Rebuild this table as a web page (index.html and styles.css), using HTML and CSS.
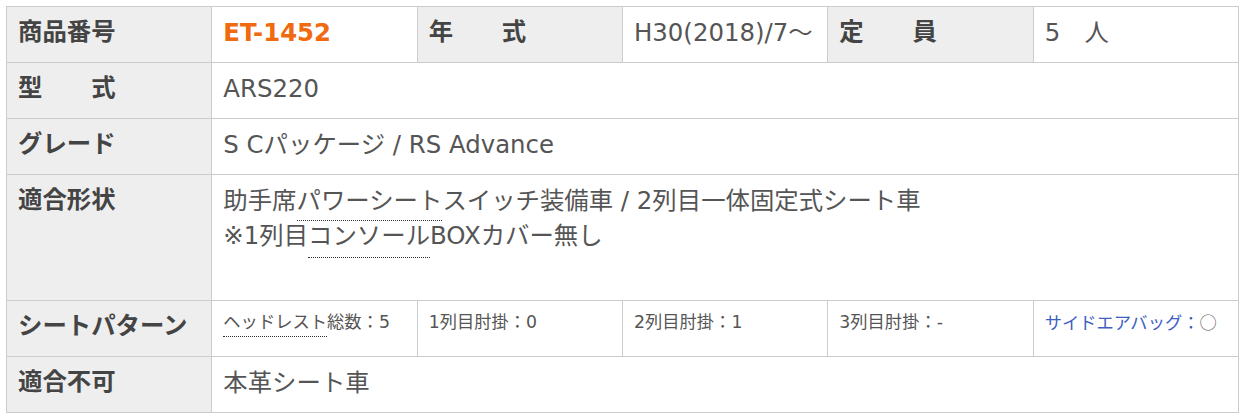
FILE: index.html
```html
<!DOCTYPE html>
<html lang="ja">
<head>
<meta charset="utf-8">
<title>適合情報</title>
<link rel="stylesheet" href="styles.css">
</head>
<body>
<div class="wrap">
  <table class="spec">
    <colgroup>
      <col><col><col><col><col><col>
    </colgroup>
    <tr class="row">
      <th>商品番号</th>
      <td class="code">ET-1452</td>
      <th>年　　式</th>
      <td>H30(2018)/7～</td>
      <th>定　　員</th>
      <td>5　人</td>
    </tr>
    <tr class="row">
      <th>型　　式</th>
      <td colspan="5">ARS220</td>
    </tr>
    <tr class="row">
      <th>グレード</th>
      <td colspan="5">S Cパッケージ / RS Advance</td>
    </tr>
    <tr class="row-tall">
      <th>適合形状</th>
      <td colspan="5">助手席<span class="tip tip-a">パワーシート</span>スイッチ装備車 / 2列目一体固定式シート車<br>※1列目<span class="tip tip-b">コンソール</span>BOXカバー無し</td>
    </tr>
    <tr class="row">
      <th>シートパターン</th>
      <td class="seat"><span class="tip tip-c">ヘッドレスト</span>総数：5</td>
      <td class="seat">1列目肘掛：0</td>
      <td class="seat">2列目肘掛：1</td>
      <td class="seat">3列目肘掛：-</td>
      <td class="seat airbag">サイドエアバッグ：<span class="mark">○</span></td>
    </tr>
    <tr class="row">
      <th>適合不可</th>
      <td colspan="5">本革シート車</td>
    </tr>
  </table>
</div>
</body>
</html>
```

FILE: styles.css
```css
html, body {
  margin: 0;
  background: #ffffff;
}

.wrap {
  padding: 6px;
}

.spec {
  border-collapse: collapse;
  table-layout: fixed;
  width: 1233px;
  font-family: "DejaVu Sans", "Noto Sans CJK JP", sans-serif;
  font-size: 24.4px;
  color: #555555;
}

.spec th,
.spec td {
  border: 1px solid #cccccc;
  padding: 8px 11px 0;
  vertical-align: top;
  text-align: left;
  line-height: 35px;
  white-space: nowrap;
}

.spec th {
  background: #eeeeee;
  color: #444444;
  font-weight: bold;
  padding-top: 7px;
}

.row {
  height: 56px;
}

.row-tall {
  height: 126px;
}

.code {
  color: #f06a10;
  font-weight: bold;
}

.tip {
  border-bottom: 1px dotted #333333;
}

.tip-a {
  padding-bottom: 5px;
}

.tip-b {
  padding-bottom: 7px;
}

.spec .seat {
  font-size: 17.3px;
  line-height: 30px;
  padding-top: 6px;
}

.tip-c {
  padding-bottom: 4px;
}

.airbag {
  color: #3d5fc2;
}

.mark {
  font-family: "Noto Sans CJK JP", sans-serif;
  color: #555555;
  font-weight: 300;
}
```
